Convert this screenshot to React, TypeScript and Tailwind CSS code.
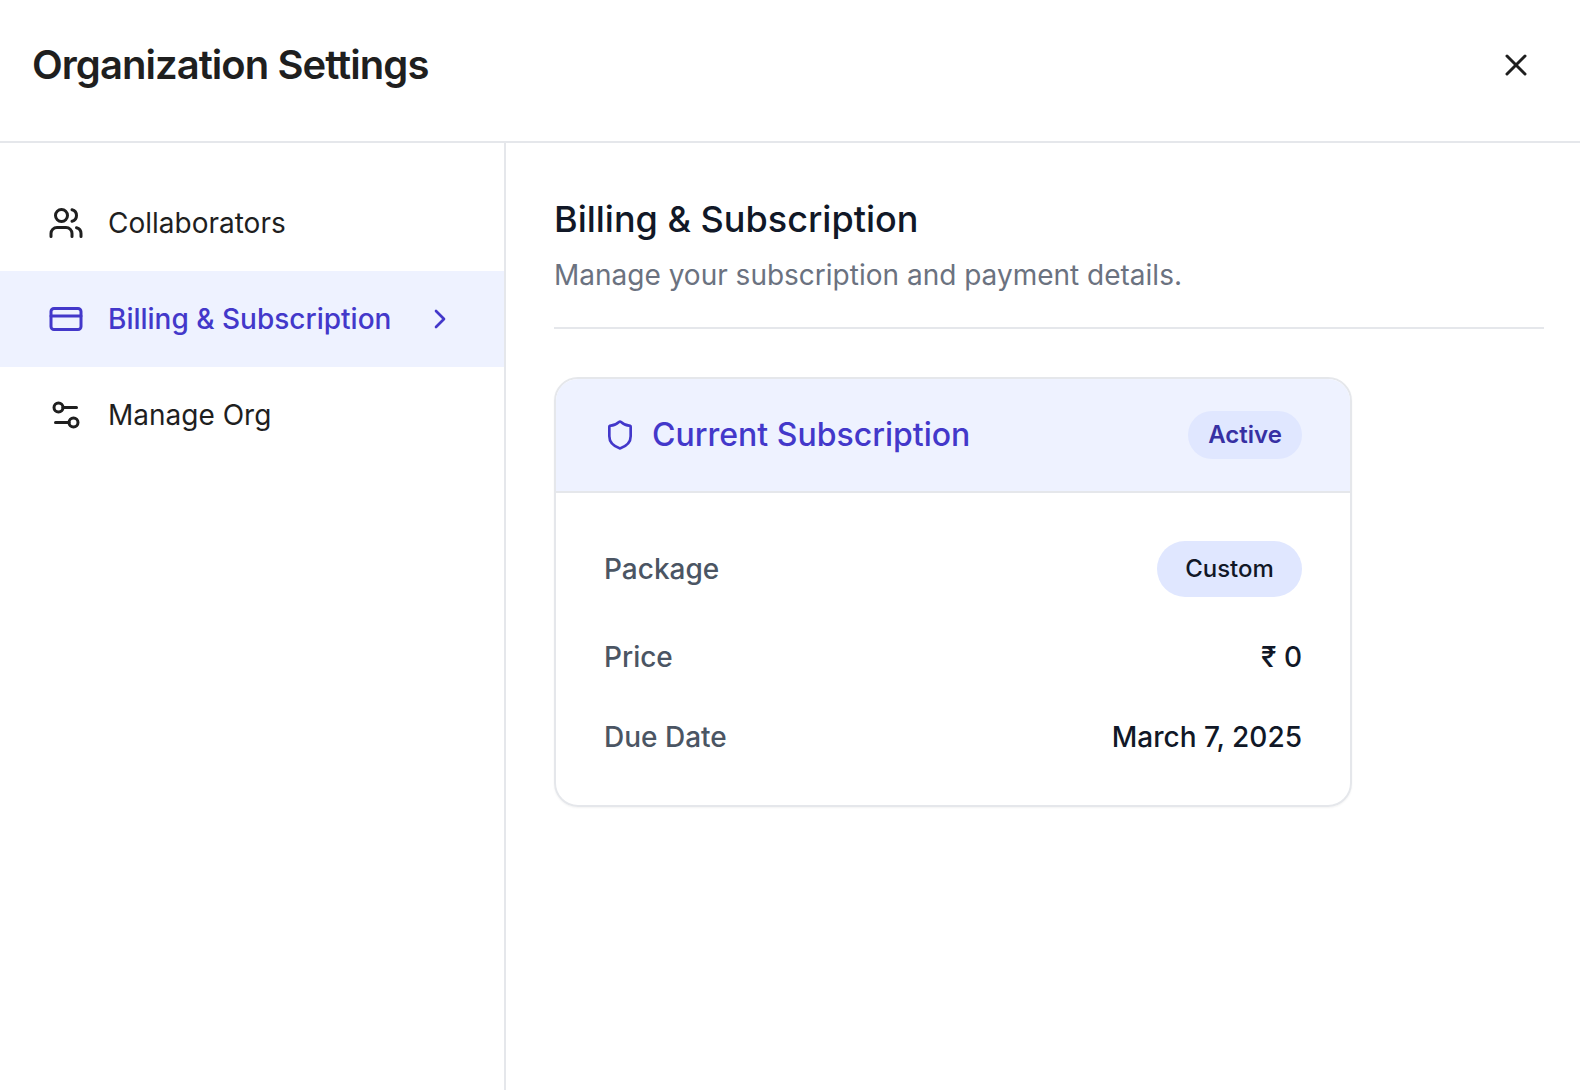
import { Users, CreditCard, Settings2, Shield, ChevronRight, X } from "lucide-react";

export default function App() {
  return (
    <div className="h-[1090px] w-[1580px] bg-white flex flex-col font-['Inter',sans-serif] overflow-hidden">
      <header className="h-[143px] shrink-0 border-b-2 border-[#e5e7eb] flex items-center justify-between pl-8 pr-[46px] pb-3">
        <h1 className="text-[40px] leading-[48px] font-semibold text-[#1f1f1f] tracking-[-0.95px]">Organization Settings</h1>
        <X className="w-9 h-9 text-[#1f1f1f]" strokeWidth={2} />
      </header>
      <div className="flex flex-1">
        <aside className="w-[506px] shrink-0 border-r-2 border-[#e5e7eb] pt-8">
          <div className="h-24 flex items-center pl-12 gap-6 text-[#1f1f1f]">
            <Users className="w-9 h-9" strokeWidth={2} />
            <span className="text-[28px]">Collaborators</span>
          </div>
          <div className="h-24 flex items-center pl-12 gap-6 bg-[#eef2ff] text-[#4338ca]">
            <CreditCard className="w-9 h-9" strokeWidth={2} />
            <span className="text-[28px] font-medium">Billing &amp; Subscription</span>
            <ChevronRight className="w-8 h-8 ml-[9px]" strokeWidth={2} />
          </div>
          <div className="h-24 flex items-center pl-12 gap-6 text-[#1f1f1f]">
            <Settings2 className="w-9 h-9" strokeWidth={2} />
            <span className="text-[28px]">Manage Org</span>
          </div>
        </aside>
        <main className="flex-1 pl-12 pr-9 pt-[49px]">
          <div className="border-b-2 border-[#e5e7eb] pb-8">
            <h2 className="text-[36px] leading-[54px] font-medium text-[#111827]">Billing &amp; Subscription</h2>
            <p className="mt-[9px] text-[28px] leading-[40px] text-[#6b7280]">Manage your subscription and payment details.</p>
          </div>
          <section className="mt-12 w-[798px] rounded-3xl border-2 border-[#e5e7eb] overflow-hidden shadow-[0_1px_2px_rgba(0,0,0,0.05)]">
            <div className="h-[114px] bg-[#eef2ff] border-b-2 border-[#e5e7eb] flex items-center justify-between px-12">
              <div className="flex items-center gap-4 text-[#4338ca]">
                <Shield className="w-8 h-8" strokeWidth={2} />
                <span className="text-[32px] font-medium">Current Subscription</span>
              </div>
              <span className="h-12 w-[114px] rounded-full bg-[#e0e7ff] flex items-center justify-center text-[24px] font-semibold text-[#3730a3]">Active</span>
            </div>
            <div className="pt-12 px-12 pb-11 flex flex-col">
              <div className="flex items-center justify-between h-14">
                <span className="text-[28px] font-medium text-[#4b5563]">Package</span>
                <span className="h-14 w-[145px] rounded-full bg-[#e0e7ff] flex items-center justify-center text-[24px] font-medium text-[#111827]">Custom</span>
              </div>
              <div className="flex items-center justify-between h-12 mt-9">
                <span className="text-[28px] font-medium text-[#4b5563]">Price</span>
                <span className="text-[28px] font-medium text-[#111827]">₹ 0</span>
              </div>
              <div className="flex items-center justify-between h-12 mt-8">
                <span className="text-[28px] font-medium text-[#4b5563]">Due Date</span>
                <span className="text-[28px] font-medium text-[#111827]">March 7, 2025</span>
              </div>
            </div>
          </section>
        </main>
      </div>
    </div>
  );
}
